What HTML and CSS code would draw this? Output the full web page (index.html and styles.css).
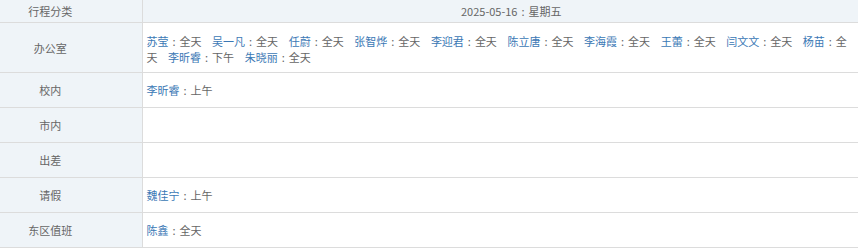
FILE: index.html
```
<!DOCTYPE html>
<html lang="zh">
<head>
<meta charset="utf-8">
<link rel="stylesheet" href="styles.css">
</head>
<body>
<table class="sched">
  <colgroup><col class="c1"><col class="c2"></colgroup>
  <thead>
    <tr class="head"><th class="cat">行程分类</th><th class="date">2025-05-16<span class="col">:</span>星期五</th></tr>
  </thead>
  <tbody>
    <tr class="tall"><td class="cat">办公室</td><td class="data"><a class="nm">苏莹</a><span class="col">:</span><span class="st">全天</span><a class="nm">吴一凡</a><span class="col">:</span><span class="st">全天</span><a class="nm">任蔚</a><span class="col">:</span><span class="st">全天</span><a class="nm">张智烨</a><span class="col">:</span><span class="st">全天</span><a class="nm">李迎君</a><span class="col">:</span><span class="st">全天</span><a class="nm">陈立唐</a><span class="col">:</span><span class="st">全天</span><a class="nm">李海霞</a><span class="col">:</span><span class="st">全天</span><a class="nm">王蕾</a><span class="col">:</span><span class="st">全天</span><a class="nm">闫文文</a><span class="col">:</span><span class="st">全天</span><a class="nm">杨苗</a><span class="col">:</span><span class="st">全天</span><a class="nm">李昕睿</a><span class="col">:</span><span class="st">下午</span><a class="nm">朱晓丽</a><span class="col">:</span><span class="st">全天</span></td></tr>
    <tr class="row"><td class="cat">校内</td><td class="data"><a class="nm">李昕睿</a><span class="col">:</span><span class="st">上午</span></td></tr>
    <tr class="row"><td class="cat">市内</td><td class="data"></td></tr>
    <tr class="row"><td class="cat">出差</td><td class="data"></td></tr>
    <tr class="row"><td class="cat">请假</td><td class="data"><a class="nm">魏佳宁</a><span class="col">:</span><span class="st">上午</span></td></tr>
    <tr class="row"><td class="cat">东区值班</td><td class="data"><a class="nm">陈鑫</a><span class="col">:</span><span class="st">全天</span></td></tr>
  </tbody>
</table>
</body>
</html>
```
FILE: styles.css
```
html, body {
  margin: 0;
  padding: 0;
  background: #fff;
}
body {
  font-family: "Noto Sans CJK SC", "Noto Sans", sans-serif;
  font-size: 11px;
  color: #666;
}
.sched {
  width: 858px;
  border-collapse: collapse;
  table-layout: fixed;
}
.c1 { width: 142px; }
.sched th, .sched td {
  padding: 0;
  border-bottom: 1px solid #dcdcdc;
  font-weight: normal;
  line-height: 16px;
}
.sched .cat {
  background: #eff4f8;
  border-right: 1px solid #dcdcdc;
  text-align: center;
  padding-right: 41px;
  color: #666;
}
.head th {
  height: 22px;
  background: #eff4f8;
}
.head .date {
  text-align: center;
  padding-left: 22px;
}
.tall td { height: 49px; }
.row td { height: 34px; }
.data {
  padding: 0 6px 0 4px !important;
  text-align: left;
  vertical-align: middle;
}
.tall .data {
  height: 47px;
  padding-top: 2px !important;
}
.st { margin-right: 10.6px; }
.col {
  display: inline-block;
  width: 11px;
  text-align: center;
}
.nm { color: #3b78b5; text-decoration: none; }
```
